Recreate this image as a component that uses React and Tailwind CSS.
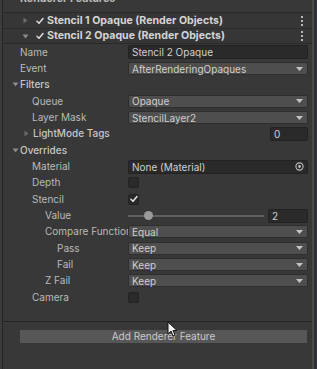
import React from "react";

// --- small editor widgets ---
function Arrow({ open }) {
  return (
    <svg width="7" height="7" viewBox="0 0 7 7" className="shrink-0">
      {open ? <path d="M0.5 1.5 L6.5 1.5 L3.5 5.5 Z" fill="#8a8a8a" /> : <path d="M1.5 0.5 L5.5 3.5 L1.5 6.5 Z" fill="#6a6a6a" />}
    </svg>
  );
}

function Check({ size = 8, color = "#e6e6e6" }) {
  return (
    <svg width={size} height={size} viewBox="0 0 8 8">
      <path d="M1 4.3 L3 6.3 L7 1.5" stroke={color} strokeWidth="1.5" fill="none" strokeLinecap="round" strokeLinejoin="round" />
    </svg>
  );
}

function Kebab() {
  return (
    <div className="flex flex-col gap-[2px] items-center">
      <span className="w-[2px] h-[2px] bg-[#b8b8b8]" />
      <span className="w-[2px] h-[2px] bg-[#b8b8b8]" />
      <span className="w-[2px] h-[2px] bg-[#b8b8b8]" />
    </div>
  );
}

function Dropdown({ value }) {
  return (
    <div className="flex-1 h-[13px] bg-[#4e4e4e] border border-[#2e2e2e] rounded-[2px] flex items-center pl-[3px] pr-[4px] text-[#cfcfcf]">
      <span className="flex-1 leading-none">{value}</span>
      <svg width="7" height="4" viewBox="0 0 7 4"><path d="M0 0 L7 0 L3.5 4 Z" fill="#c4c4c4" /></svg>
    </div>
  );
}

function TextField({ value, className = "flex-1" }) {
  return (
    <div className={`${className} h-[14px] bg-[#2a2a2a] border border-[#222] rounded-[2px] flex items-center pl-[3px] text-[#cfcfcf]`}>
      <span className="leading-none">{value}</span>
    </div>
  );
}

function Checkbox({ checked }) {
  return (
    <div className="w-[11px] h-[11px] bg-[#2a2a2a] border border-[#232323] rounded-[2px] flex items-center justify-center">
      {checked && <Check size={8} />}
    </div>
  );
}

function Row({ label, indent = 17, children }) {
  return (
    <div className="h-[16.35px] flex items-center pr-[4px]">
      <div className="w-[125px] shrink-0 overflow-hidden whitespace-nowrap text-[#bababa]" style={{ paddingLeft: indent }}>
        {label}
      </div>
      <div className="flex-1 flex items-center">{children}</div>
    </div>
  );
}

function Foldout({ label, arrowAt, indent, open, children }) {
  return (
    <div className="h-[16.35px] flex items-center pr-[4px]">
      <div className="flex items-center w-[125px] shrink-0 text-[#c6c6c6]" style={{ paddingLeft: arrowAt }}>
        <Arrow open={open} />
        <span className="font-medium" style={{ marginLeft: indent }}>{label}</span>
      </div>
      <div className="flex-1 flex items-center">{children}</div>
    </div>
  );
}

export default function App() {
  return (
    <div className="w-[317px] h-[369px] bg-[#383838] relative overflow-hidden font-['Inter','Liberation_Sans',sans-serif] text-[10px] text-[#c4c4c4]">
      <div className="flex h-full">
        <div className="w-[3px] bg-[#3c3c3c] border-r border-[#262626]" />

        <div className="flex-1 flex flex-col">
          {/* header, cut off at top */}
          <div className="h-[13px] overflow-hidden border-b border-[#2a2a2a]">
            <div className="-mt-[8px] pl-[17px] leading-[14px] text-[10.6px] font-bold text-[#bcbcbc]">Renderer Features</div>
          </div>

          {/* feature rows */}
          <div className="h-[16px] flex items-center border-b border-[#2c2c2c] bg-[#363636] pr-[9px]">
            <div className="pl-[19px]"><Arrow open={false} /></div>
            <div className="ml-[7px]"><Check size={8} color="#dcdcdc" /></div>
            <span className="ml-[3px] text-[10.6px] font-bold text-[#d4d4d4] flex-1">Stencil 1 Opaque (Render Objects)</span>
            <Kebab />
          </div>
          <div className="h-[15px] flex items-center border-b border-[#2a2a2a] bg-[#363636] pr-[9px]">
            <div className="pl-[19px]"><Arrow open={true} /></div>
            <div className="ml-[7px]"><Check size={8} color="#dcdcdc" /></div>
            <span className="ml-[3px] text-[10.6px] font-bold text-[#d4d4d4] flex-1">Stencil 2 Opaque (Render Objects)</span>
            <Kebab />
          </div>

          <Row label="Name"><TextField value="Stencil 2 Opaque" /></Row>
          <Row label="Event"><Dropdown value="AfterRenderingOpaques" /></Row>
          <Foldout label="Filters" arrowAt={9} indent={1} open />
          <Row label="Queue" indent={29}><Dropdown value="Opaque" /></Row>
          <Row label="Layer Mask" indent={29}><Dropdown value="StencilLayer2" /></Row>
          <Foldout label="LightMode Tags" arrowAt={20} indent={3} open={false}>
            <div className="flex-1" />
            <TextField value="0" className="w-[38px]" />
          </Foldout>
          <Foldout label="Overrides" arrowAt={9} indent={1} open />
          <Row label="Material" indent={29}>
            <div className="flex-1 h-[14px] bg-[#2a2a2a] border border-[#222] rounded-[2px] flex items-center pl-[3px] pr-[3px] text-[#cfcfcf]">
              <span className="flex-1 leading-none">None (Material)</span>
              <svg width="9" height="9" viewBox="0 0 9 9">
                <circle cx="4.5" cy="4.5" r="3.6" stroke="#bdbdbd" strokeWidth="1.1" fill="none" />
                <circle cx="4.5" cy="4.5" r="1.4" fill="#bdbdbd" />
              </svg>
            </div>
          </Row>
          <Row label="Depth" indent={29}><Checkbox /></Row>
          <Row label="Stencil" indent={29}><Checkbox checked /></Row>
          <Row label="Value" indent={42}>
            <div className="flex-1 h-[2px] bg-[#5f5f5f] relative">
              <span className="absolute left-[16px] -top-[4px] w-[9px] h-[9px] rounded-full bg-[#9a9a9a]" />
            </div>
            <TextField value="2" className="w-[40px] ml-[4px]" />
          </Row>
          <Row label="Compare Function" indent={42}><Dropdown value="Equal" /></Row>
          <Row label="Pass" indent={54}><Dropdown value="Keep" /></Row>
          <Row label="Fail" indent={54}><Dropdown value="Keep" /></Row>
          <Row label="Z Fail" indent={42}><Dropdown value="Keep" /></Row>
          <Row label="Camera" indent={29}><Checkbox /></Row>

          <div className="h-[16px] border-b border-[#262626]" />

          <div className="pt-[8px] pl-[17px] pr-[5px]">
            <div className="h-[13px] bg-[#575757] flex items-center justify-center text-[#cacaca] leading-none">
              Add Renderer Feature
            </div>
          </div>
        </div>

        <div className="w-[5px] border-l-2 border-[#4a4a4a] bg-[#2e3238]" />
      </div>

      {/* mouse cursor */}
      <svg className="absolute left-[167px] top-[321px]" width="11" height="16" viewBox="0 0 11 16">
        <path d="M1 1 L1 13 L4 10 L6 15 L8 14 L6 9.5 L10 9.5 Z" fill="#f4f4f4" stroke="#111" strokeWidth="1" strokeLinejoin="round" />
      </svg>
    </div>
  );
}
